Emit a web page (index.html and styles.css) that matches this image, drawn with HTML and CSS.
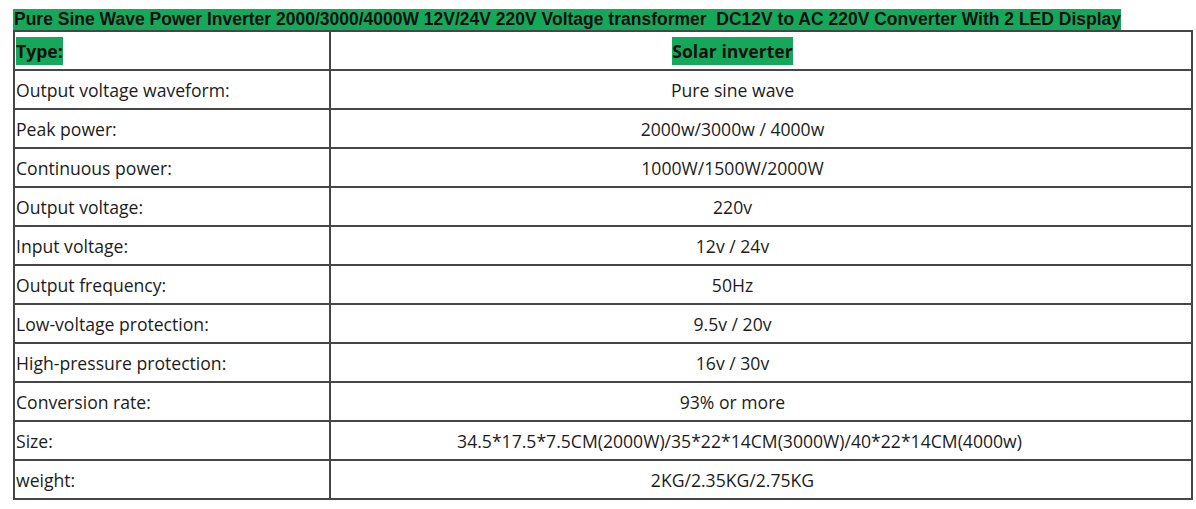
FILE: index.html
```html
<!DOCTYPE html>
<html>
<head>
<meta charset="utf-8">
<link rel="stylesheet" href="styles.css">
</head>
<body>
<div class="page">
  <div class="title"><span class="hl">Pure Sine Wave Power Inverter 2000/3000/4000W 12V/24V 220V Voltage transformer&nbsp; DC12V to AC 220V Converter With 2 LED Display</span></div>
  <table class="spec">
    <tr class="head"><td class="k"><span class="tag">Type:</span></td><td class="v"><span class="tag">Solar inverter</span></td></tr>
    <tr><td class="k">Output voltage waveform:</td><td class="v">Pure sine wave</td></tr>
    <tr><td class="k">Peak power:</td><td class="v">2000w/3000w / 4000w</td></tr>
    <tr><td class="k">Continuous power:</td><td class="v">1000W/1500W/2000W</td></tr>
    <tr><td class="k">Output voltage:</td><td class="v">220v</td></tr>
    <tr><td class="k">Input voltage:</td><td class="v">12v / 24v</td></tr>
    <tr><td class="k">Output frequency:</td><td class="v">50Hz</td></tr>
    <tr><td class="k">Low-voltage protection:</td><td class="v">9.5v / 20v</td></tr>
    <tr><td class="k">High-pressure protection:</td><td class="v">16v / 30v</td></tr>
    <tr><td class="k">Conversion rate:</td><td class="v">93% or more</td></tr>
    <tr><td class="k">Size:</td><td class="v size">34.5*17.5*7.5CM(2000W)/35*22*14CM(3000W)/40*22*14CM(4000w)</td></tr>
    <tr><td class="k">weight:</td><td class="v">2KG/2.35KG/2.75KG</td></tr>
  </table>
</div>
</body>
</html>
```
FILE: styles.css
```css
html, body {
  margin: 0;
  padding: 0;
  background: #ffffff;
}
.page {
  padding: 9px 0 0 13px;
}
.title {
  font-family: "Liberation Sans", Arial, sans-serif;
  font-weight: bold;
  font-size: 17.5px;
  line-height: 20px;
  height: 21px;
  color: #111;
  white-space: nowrap;
}
.hl {
  background: #16a85a;
  padding: 0 0 1px 1px;
}
.spec {
  border-collapse: collapse;
  width: 1180px;
  font-family: "Open Sans", sans-serif;
  font-size: 17.6px;
  color: #1c1c1c;
}
.spec td {
  border: 2px solid #464646;
  height: 37px;
  padding: 0;
  vertical-align: middle;
  white-space: nowrap;
}
.spec td.k {
  width: 313px;
  padding-left: 1px;
  text-align: left;
}
.spec td.v {
  text-align: center;
  padding-right: 57px;
}
.spec td.v.size {
  padding-right: 43px;
}
.tag {
  background: #16a85a;
  font-weight: bold;
  color: #111;
  padding: 2px 0;
}
```
